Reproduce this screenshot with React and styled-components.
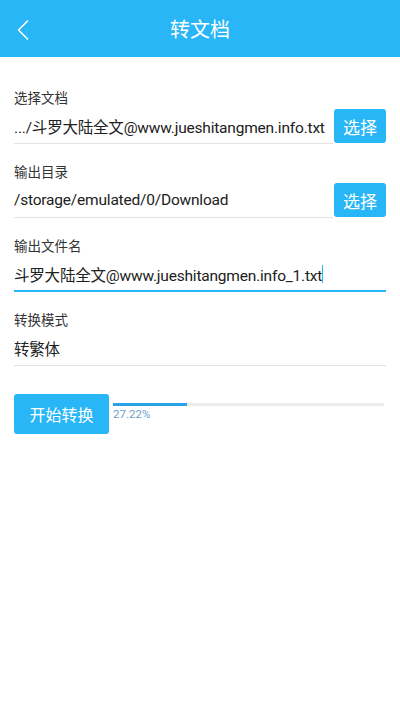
import React from "react";
import styled, { createGlobalStyle } from "styled-components";

const Global = createGlobalStyle`
  html, body { margin: 0; padding: 0; background: #fff; }
  body { font-family: Roboto, "Noto Sans CJK SC", sans-serif; }
  * { box-sizing: border-box; }
`;

const Page = styled.div`
  width: 400px;
  height: 710px;
  background: #fff;
  display: flex;
  flex-direction: column;
`;

const Header = styled.header`
  height: 57px;
  background: #29b6f6;
  display: flex;
  align-items: center;
  justify-content: center;
  position: relative;
`;

const Back = styled.button`
  position: absolute;
  left: 12px;
  top: 17px;
  width: 22px;
  height: 26px;
  border: none;
  background: none;
  padding: 0;
  display: flex;
  align-items: center;
  justify-content: center;
`;

const Title = styled.h1`
  margin: 0;
  font-family: "Noto Sans CJK SC", sans-serif;
  font-weight: 400;
  font-size: 20px;
  color: #fff;
`;

const Content = styled.main`
  padding: 30px 14px 0;
  display: flex;
  flex-direction: column;
`;

const Field = styled.section`
  display: flex;
  flex-direction: column;
  margin-bottom: 17px;
`;

const Label = styled.div`
  font-family: "Noto Sans CJK SC", sans-serif;
  font-size: 13.5px;
  line-height: 20px;
  color: #333;
  margin-bottom: 2px;
`;

const Row = styled.div`
  display: flex;
  align-items: stretch;
  gap: 1px;
`;

const Value = styled.div`
  flex: 1;
  min-width: 0;
  height: 35px;
  display: flex;
  align-items: center;
  font-size: 15.5px;
  letter-spacing: -0.2px;
  color: #212121;
  white-space: nowrap;
  overflow: hidden;
  border-bottom: ${(p) => (p.$focused ? "2px solid #29b6f6" : "1px solid #e3e3e3")};
  padding-top: ${(p) => (p.$focused ? "1px" : "0")};
`;

const Cursor = styled.span`
  display: inline-block;
  width: 1px;
  height: 18px;
  background: #29b6f6;
`;

const PickButton = styled.button`
  flex: none;
  width: 52px;
  height: 34px;
  border: none;
  border-radius: 3px;
  background: #29b6f6;
  color: #fff;
  font-family: "Noto Sans CJK SC", sans-serif;
  font-size: 17px;
  padding: 0;
`;

const ActionRow = styled.div`
  display: flex;
  align-items: flex-start;
  margin-top: 11px;
  gap: 4px;
`;

const StartButton = styled.button`
  width: 95px;
  height: 40px;
  border: none;
  border-radius: 3px;
  background: #29b6f6;
  color: #fff;
  font-family: "Noto Sans CJK SC", sans-serif;
  font-size: 16px;
  padding: 0;
`;

const Progress = styled.div`
  width: 271px;
  padding-top: 9px;
  display: flex;
  flex-direction: column;
`;

const Track = styled.div`
  height: 3px;
  background: #ececec;
`;

const Fill = styled.div`
  height: 100%;
  background: #29a3e6;
`;

const Percent = styled.div`
  font-size: 11.5px;
  line-height: 14px;
  margin-top: 1px;
  color: #6f9ec9;
`;

const fields = [
  { label: "选择文档", value: ".../斗罗大陆全文@www.jueshitangmen.info.txt", pick: true },
  { label: "输出目录", value: "/storage/emulated/0/Download", pick: true },
  { label: "输出文件名", value: "斗罗大陆全文@www.jueshitangmen.info_1.txt", focused: true },
  { label: "转换模式", value: "转繁体" },
];

export default function App() {
  const pct = 27.22;
  return (
    <Page>
      <Global />
      <Header>
        <Back aria-label="back">
          <svg width="12" height="20" viewBox="0 0 12 20">
            <path d="M10.5 1 L1.5 10 L10.5 19" fill="none" stroke="#fff" strokeWidth="1.6" strokeLinecap="round" strokeLinejoin="round" />
          </svg>
        </Back>
        <Title>转文档</Title>
      </Header>
      <Content>
        {fields.map((f) => (
          <Field key={f.label}>
            <Label>{f.label}</Label>
            <Row>
              <Value $focused={f.focused}>
                {f.value}
                {f.focused && <Cursor />}
              </Value>
              {f.pick && <PickButton>选择</PickButton>}
            </Row>
          </Field>
        ))}
        <ActionRow>
          <StartButton>开始转换</StartButton>
          <Progress>
            <Track>
              <Fill style={{ width: `${pct}%` }} />
            </Track>
            <Percent>{pct.toFixed(2)}%</Percent>
          </Progress>
        </ActionRow>
      </Content>
    </Page>
  );
}
